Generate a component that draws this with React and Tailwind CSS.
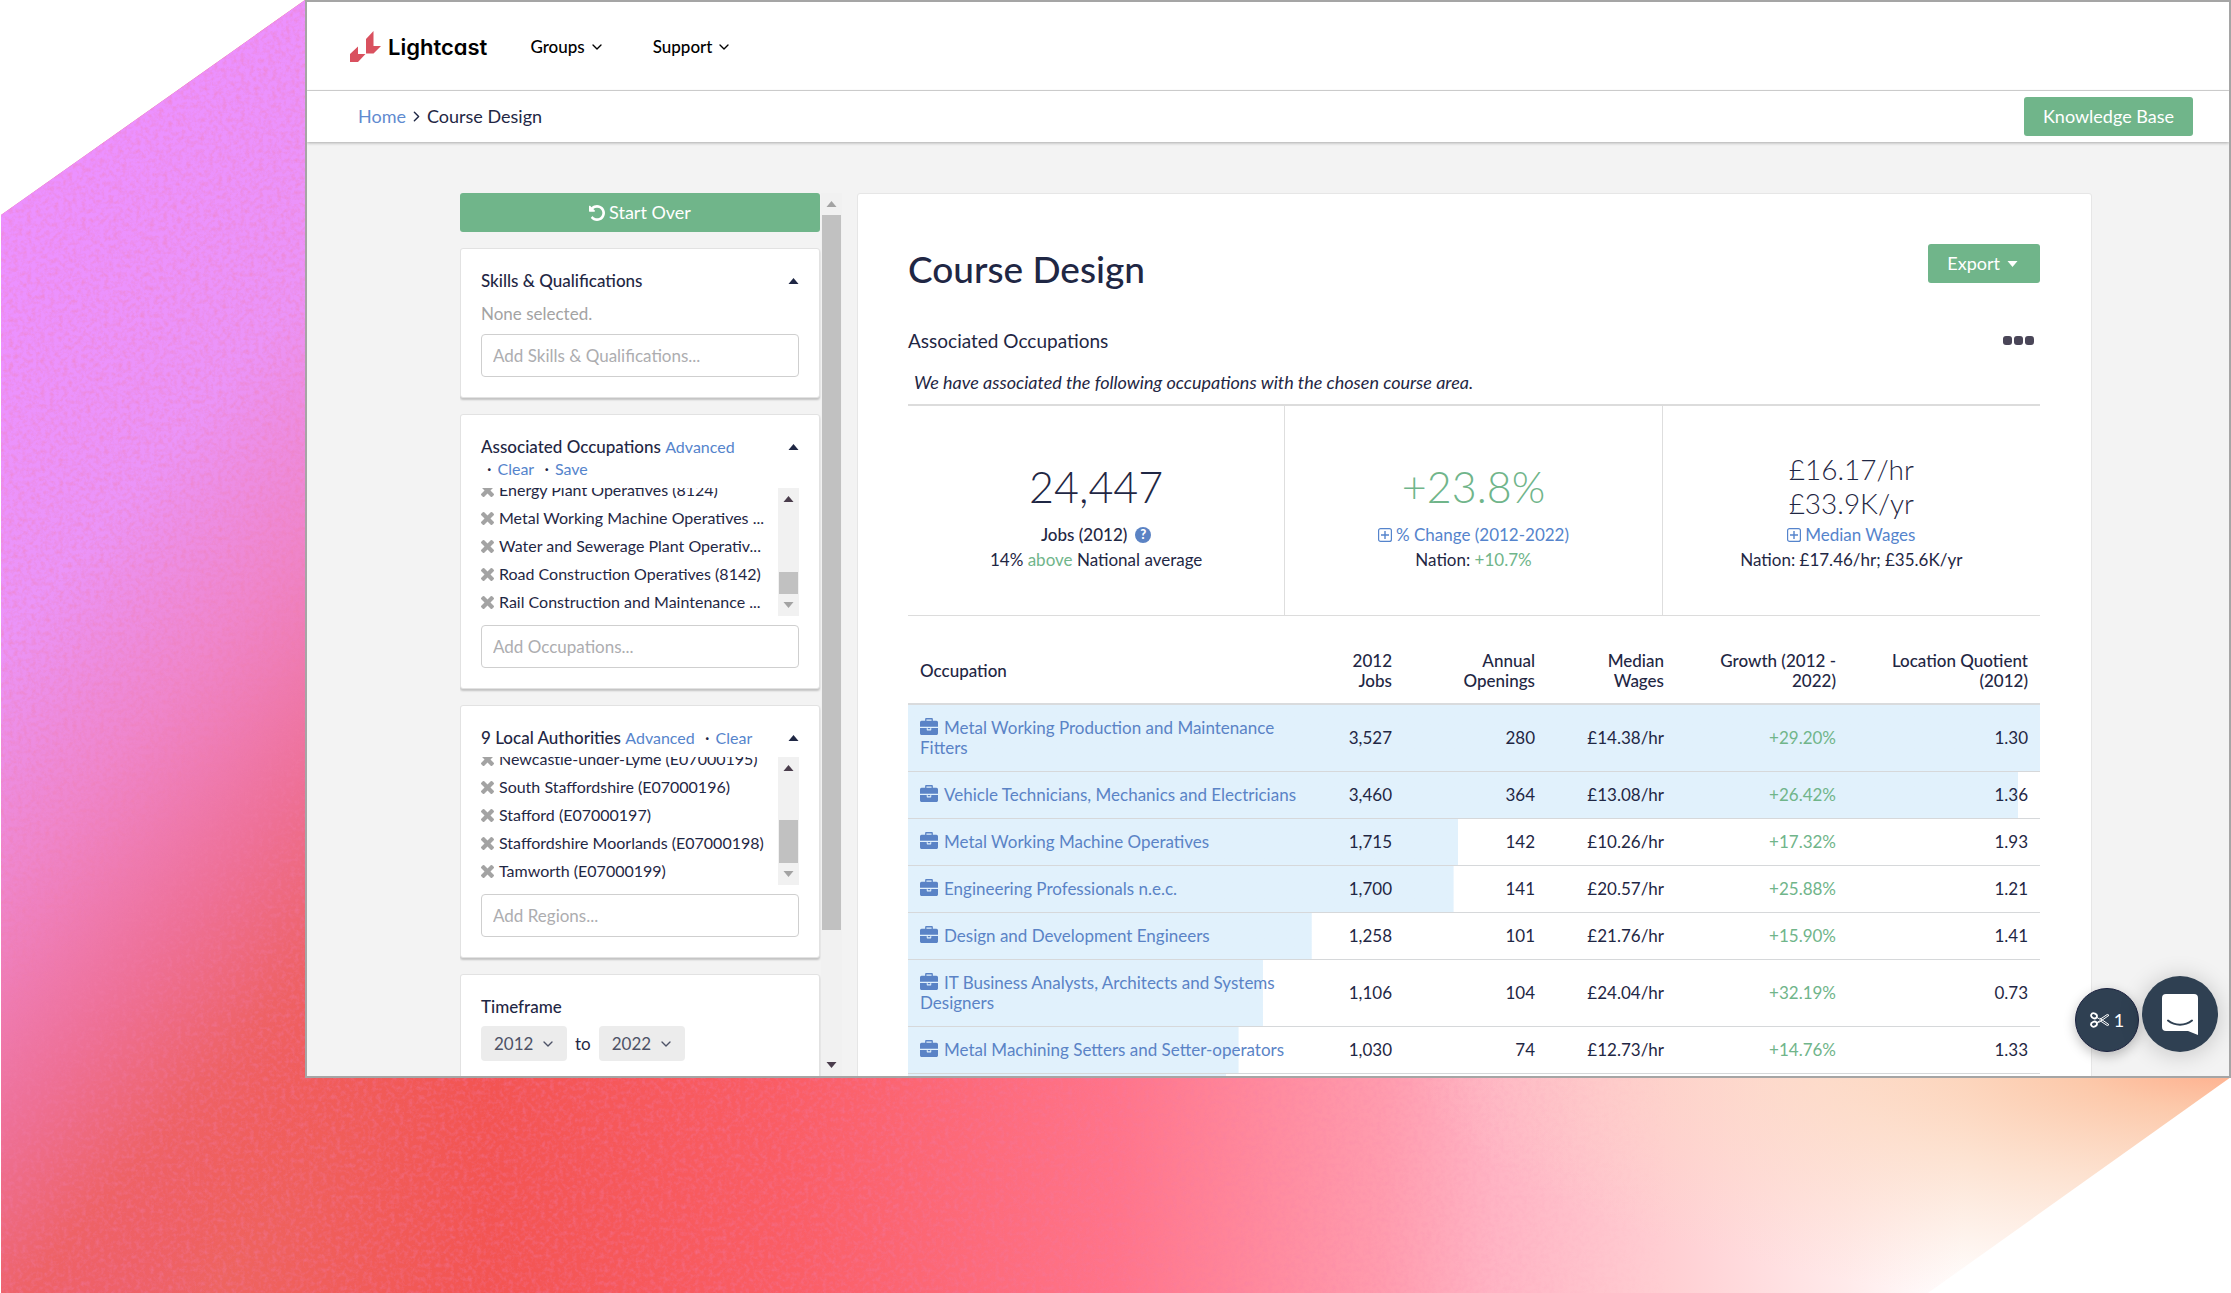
import React from "react";
import { ChevronDown, ChevronRight } from "lucide-react";

const occupations = [
  { name: "Metal Working Production and Maintenance Fitters", jobs: 3527, openings: 280, wage: "£14.38/hr", growth: "+29.20%", lq: "1.30" },
  { name: "Vehicle Technicians, Mechanics and Electricians", jobs: 3460, openings: 364, wage: "£13.08/hr", growth: "+26.42%", lq: "1.36" },
  { name: "Metal Working Machine Operatives", jobs: 1715, openings: 142, wage: "£10.26/hr", growth: "+17.32%", lq: "1.93" },
  { name: "Engineering Professionals n.e.c.", jobs: 1700, openings: 141, wage: "£20.57/hr", growth: "+25.88%", lq: "1.21" },
  { name: "Design and Development Engineers", jobs: 1258, openings: 101, wage: "£21.76/hr", growth: "+15.90%", lq: "1.41" },
  { name: "IT Business Analysts, Architects and Systems Designers", jobs: 1106, openings: 104, wage: "£24.04/hr", growth: "+32.19%", lq: "0.73" },
  { name: "Metal Machining Setters and Setter-operators", jobs: 1030, openings: 74, wage: "£12.73/hr", growth: "+14.76%", lq: "1.33" },
];

const maxJobs = 3527;

const selectedOccupations = [
  "Energy Plant Operatives (8124)",
  "Metal Working Machine Operatives ...",
  "Water and Sewerage Plant Operativ...",
  "Road Construction Operatives (8142)",
  "Rail Construction and Maintenance ...",
];

const selectedRegions = [
  "Newcastle-under-Lyme (E07000195)",
  "South Staffordshire (E07000196)",
  "Stafford (E07000197)",
  "Staffordshire Moorlands (E07000198)",
  "Tamworth (E07000199)",
];

function Backdrop() {
  return (
    <svg className="absolute inset-0 h-full w-full" viewBox="0 0 2231 1293" preserveAspectRatio="none" aria-hidden="true">
      <defs>
        <linearGradient id="base" x1="0" y1="0" x2="2231" y2="0" gradientUnits="userSpaceOnUse">
          <stop offset="0" stopColor="#ea6a8c" />
          <stop offset="0.1" stopColor="#ee6460" />
          <stop offset="0.22" stopColor="#f35452" />
          <stop offset="0.35" stopColor="#fa5d64" />
          <stop offset="0.5" stopColor="#ff748a" />
          <stop offset="0.62" stopColor="#ff9cae" />
          <stop offset="0.67" stopColor="#ffb4c4" />
          <stop offset="0.75" stopColor="#ffcfd3" />
          <stop offset="0.83" stopColor="#ffebeb" />
          <stop offset="0.88" stopColor="#ffffff" />
        </linearGradient>
        <linearGradient id="violet" x1="0" y1="0" x2="759" y2="651" gradientUnits="userSpaceOnUse">
          <stop offset="0.2" stopColor="#ec91ff" />
          <stop offset="0.42" stopColor="#eb94f8" />
          <stop offset="0.58" stopColor="#ef86cc" />
          <stop offset="0.74" stopColor="#ee7096" />
          <stop offset="0.86" stopColor="#ee6266" />
          <stop offset="1" stopColor="#f35452" stopOpacity="0" />
        </linearGradient>
        <radialGradient id="peach" cx="0" cy="0" r="1" gradientUnits="userSpaceOnUse" gradientTransform="translate(2231 1060) scale(820 250)">
          <stop offset="0" stopColor="#ffa885" />
          <stop offset="0.2" stopColor="#fcc6a6" stopOpacity="0.95" />
          <stop offset="0.5" stopColor="#fcd6bd" stopOpacity="0.7" />
          <stop offset="1" stopColor="#fcd9c8" stopOpacity="0" />
        </radialGradient>
        <filter id="grain" x="0" y="0" width="100%" height="100%">
          <feTurbulence type="fractalNoise" baseFrequency="0.22" numOctaves="3" seed="4" />
          <feColorMatrix values="0 0 0 0 0.88  0 0 0 0 0.2  0 0 0 0 0.4  1.1 0 0 0 -0.45" />
        </filter>
        <linearGradient id="fade" x1="0" y1="0" x2="1" y2="0">
          <stop offset="0" stopColor="#fff" />
          <stop offset="0.4" stopColor="#fff" />
          <stop offset="0.75" stopColor="#000" />
        </linearGradient>
        <mask id="grainMask">
          <rect width="2231" height="1293" fill="url(#fade)" />
        </mask>
        <clipPath id="shape">
          <polygon points="1,215 305,0 2231,0 2231,1077 1928,1293 1,1293" />
        </clipPath>
      </defs>
      <g clipPath="url(#shape)">
        <rect width="2231" height="1293" fill="url(#base)" />
        <rect width="2231" height="1293" fill="url(#violet)" />
        <rect width="2231" height="1293" fill="url(#peach)" />
        <g mask="url(#grainMask)">
          <rect width="2231" height="1293" filter="url(#grain)" opacity="0.8" />
        </g>
      </g>
    </svg>
  );
}

function Caret({ up, className = "" }) {
  return (
    <svg viewBox="0 0 10 6" className={`h-[6px] w-[11px] ${className}`} fill="currentColor" aria-hidden="true">
      <path d={up ? "M0 6L5 0l5 6z" : "M0 0h10L5 6z"} />
    </svg>
  );
}

function UndoIcon() {
  return (
    <svg viewBox="0 128 1536 1536" className="size-4" fill="currentColor" aria-hidden="true">
      <path d="M1536 896q0 156-61 298t-164 245-245 164-298 61q-172 0-327-72.5t-264-204.5q-7-10-6.5-22.5t8.5-20.5l137-138q10-9 25-9 16 2 23 12 73 95 179 147t225 52q104 0 198.5-40.5t163.5-109.5 109.5-163.5 40.5-198.5-40.5-198.5-109.5-163.5-163.5-109.5-198.5-40.5q-98 0-188 35.5t-160 101.5l137 138q31 30 14 69-17 40-59 40h-448q-26 0-45-19t-19-45v-448q0-42 40-59 39-17 69 14l130 129q107-101 244.5-156.5t284.5-55.5q156 0 298 61t245 164 164 245 61 298z" />
    </svg>
  );
}

function RemoveIcon() {
  return (
    <svg viewBox="302 366 1188 1188" className="size-[13px]" fill="currentColor" aria-hidden="true">
      <path d="M1490 1322q0 40-28 68l-136 136q-28 28-68 28t-68-28l-294-294-294 294q-28 28-68 28t-68-28l-136-136q-28-28-28-68t28-68l294-294-294-294q-28-28-28-68t28-68l136-136q28-28 68-28t68 28l294 294 294-294q28-28 68-28t68 28l136 136q28 28 28 68t-28 68l-294 294 294 294q28 28 28 68z" />
    </svg>
  );
}

function BriefcaseIcon() {
  return (
    <svg viewBox="0 0 1792 1536" preserveAspectRatio="none" className="-my-1 mr-1.5 inline h-[17px] w-[18px] align-[3px]" fill="currentColor" aria-hidden="true">
      <path d="M640 256h512v-128h-512v128zM1792 896v480q0 66-47 113t-113 47h-1472q-66 0-113-47t-47-113v-480h672v160q0 26 19 45t45 19h320q26 0 45-19t19-45v-160h672zM1024 896v128h-256v-128h256zM1792 416v384h-1792v-384q0-66 47-113t113-47h352v-160q0-40 28-68t68-28h576q40 0 68 28t28 68v160h352q66 0 113 47t47 113z" />
    </svg>
  );
}

function PlusBox() {
  return (
    <svg viewBox="0 0 14 14" className="size-[14px]" fill="none" stroke="currentColor" aria-hidden="true">
      <rect x="0.6" y="0.6" width="12.8" height="12.8" rx="2" strokeWidth="1.2" />
      <path d="M7 3v8M3 7h8" strokeWidth="1.4" />
    </svg>
  );
}

function Header() {
  return (
    <header className="flex h-[89px] shrink-0 items-center border-b border-[#d6d6d6] pt-px pl-[43px]">
      <a href="#" className="flex items-center gap-[7px] text-black">
        <svg viewBox="0 0 31 31" className="size-[31px]" aria-hidden="true">
          <path fill="#d9515f" d="M16 8l7.500-8v15H31l-7.500 7.500H16z" />
          <path fill="#d9515f" d="M0 23l8-7.500V23h7.500L8 31H0z" />
        </svg>
        <span className="font-[Inter] text-[22px] leading-7 font-semibold [font-feature-settings:'cv11']">Lightcast</span>
      </a>
      <nav className="ml-[43px] flex items-center gap-12 text-[17px] font-medium text-black">
        <button className="flex items-center gap-1">Groups <ChevronDown className="size-4" /></button>
        <button className="flex items-center gap-1">Support <ChevronDown className="size-4" /></button>
      </nav>
    </header>
  );
}

function Breadcrumb() {
  return (
    <div className="relative z-10 flex h-[51px] shrink-0 items-center justify-between bg-white pr-9 pl-[51px] text-[18px] shadow-[0_1px_3px_rgba(0,0,0,0.3)]">
      <div className="flex items-center">
        <a href="#" className="text-[#5f8bd0]">Home</a>
        <ChevronRight className="mx-0.5 size-[17px]" />
        <span>Course Design</span>
      </div>
      <button className="h-[39px] rounded-[3px] bg-[#70b58a] px-[19px] text-white">Knowledge Base</button>
    </div>
  );
}

function Card({ title, links = [], children, collapsible = true }) {
  return (
    <section className="rounded-[3px] border border-[#e2e2e2] bg-white px-5 pt-[21px] pb-5 shadow-[0_2px_2px_rgba(0,0,0,0.2)]">
      <div className="flex items-start justify-between">
        <h3 className="w-[290px] text-[17px] leading-[22px] font-medium">
          {title}
          {links.map((link, i) => (
            <React.Fragment key={link}>
              {" "}
              {i > 0 && <span className="mx-1.5">·</span>}
              <a href="#" className="text-[16px] font-normal text-[#5584cc]">{link}</a>
            </React.Fragment>
          ))}
        </h3>
        {collapsible && (
          <button aria-label={`Collapse ${title}`} className="flex h-[22px] items-center">
            <Caret up />
          </button>
        )}
      </div>
      {children}
    </section>
  );
}

function SelectedList({ items, thumb }) {
  return (
    <div className="mt-2 flex h-[128px] overflow-hidden">
      <ul className="flex min-w-0 flex-1 flex-col justify-end text-[16px] leading-7">
        {items.map((item) => (
          <li key={item} className="flex shrink-0 items-center gap-[5px]">
            <button aria-label={`Remove ${item}`} className="text-[#a3a3a3]"><RemoveIcon /></button>
            <span className="whitespace-nowrap">{item}</span>
          </li>
        ))}
      </ul>
      <div className="flex w-[21px] shrink-0 flex-col items-center justify-between bg-[#f1f1f1] py-2" aria-hidden="true">
        <Caret up className="text-[#4a3d4c]" />
        <div className="flex w-full flex-col items-center gap-2">
          <div className={thumb} />
          <Caret className="text-[#a3a3a3]" />
        </div>
      </div>
    </div>
  );
}

function AddInput({ placeholder }) {
  return (
    <input
      type="text"
      aria-label={placeholder}
      placeholder={placeholder}
      className="mt-[9px] block h-[43px] w-full rounded-[4px] border border-[#cfcfcf] px-[11px] text-[17px] placeholder:text-[#adadb0]"
    />
  );
}

function YearSelect({ label, year }) {
  return (
    <span className="relative flex items-center text-[#4d5266]">
      <select aria-label={label} defaultValue={year} className="h-[35px] w-[86px] appearance-none rounded-[4px] bg-[#ececec] pl-[13px] text-[17px]">
        <option>{year}</option>
      </select>
      <ChevronDown className="pointer-events-none absolute right-[11px] size-4" />
    </span>
  );
}

function Sidebar() {
  return (
    <aside className="flex w-[382px] shrink-0">
      <div className="flex min-w-0 flex-1 flex-col gap-4 overflow-hidden pr-px pb-4">
        <button className="flex h-[39px] shrink-0 items-center justify-center gap-1 rounded-[3px] bg-[#70b58a] text-[18px] text-white">
          <UndoIcon /> Start Over
        </button>
        <Card title="Skills & Qualifications">
          <p className="mt-[11px] text-[17px] leading-[22px] text-[#a3a3a3]">None selected.</p>
          <AddInput placeholder="Add Skills & Qualifications..." />
        </Card>
        <Card title="Associated Occupations" links={["Advanced", "Clear", "Save"]}>
          <SelectedList items={selectedOccupations} thumb="h-[22px] w-[19px] bg-[#c1c1c1]" />
          <AddInput placeholder="Add Occupations..." />
        </Card>
        <Card title="9 Local Authorities" links={["Advanced", "Clear"]}>
          <SelectedList items={selectedRegions} thumb="h-[43px] w-[19px] bg-[#c1c1c1]" />
          <AddInput placeholder="Add Regions..." />
        </Card>
        <Card title="Timeframe" collapsible={false}>
          <div className="mt-2 flex items-center gap-2 text-[17px]">
            <YearSelect label="Start year" year="2012" />
            <span>to</span>
            <YearSelect label="End year" year="2022" />
          </div>
        </Card>
      </div>
      <div className="flex w-[21px] shrink-0 flex-col items-center justify-between bg-[#f1f1f1] py-2" aria-hidden="true">
        <div className="flex min-h-0 w-full flex-1 flex-col items-center gap-2">
          <Caret up className="shrink-0 text-[#a3a3a3]" />
          <div className="h-[83%] w-[19px] bg-[#c1c1c1]" />
        </div>
        <Caret className="shrink-0 text-[#4a3d4c]" />
      </div>
    </aside>
  );
}

function Stats() {
  return (
    <div className="grid grid-cols-3 divide-x divide-[#dedede] border-t-2 border-b border-[#dcdcdc] text-center text-[17px] leading-[25px]">
      <div className="flex h-[209px] flex-col items-center justify-center pt-[3px]">
        <div className="text-[43px] leading-[70px] font-light">24,447</div>
        <div className="flex items-center gap-2 font-medium">
          Jobs (2012)
          <button aria-label="About jobs" className="flex size-4 items-center justify-center rounded-full bg-[#5b83c4] text-[13px] leading-none font-black text-white">?</button>
        </div>
        <div>14% <span className="text-[#70b58a]">above</span> National average</div>
      </div>
      <div className="flex h-[209px] flex-col items-center justify-center pt-[3px]">
        <div className="text-[43px] leading-[70px] font-light text-[#70b58a]">+23.8%</div>
        <a href="#" className="flex items-center gap-1 text-[#5584cc]"><PlusBox />% Change (2012-2022)</a>
        <div>Nation: <span className="text-[#70b58a]">+10.7%</span></div>
      </div>
      <div className="flex h-[209px] flex-col items-center justify-center pt-[3px]">
        <div className="h-[70px] text-[28px] leading-[34px] font-light">
          £16.17/hr
          <br />
          £33.9K/yr
        </div>
        <a href="#" className="flex items-center gap-1 text-[#5584cc]"><PlusBox />Median Wages</a>
        <div>Nation: £17.46/hr; £35.6K/yr</div>
      </div>
    </div>
  );
}

function OccupationTable() {
  return (
    <table className="w-full table-fixed text-right text-[17px] leading-5">
      <thead>
        <tr className="border-b-2 border-[#d9dbdd]">
          <th className="px-3 pt-[35px] pb-3 text-left font-medium">Occupation</th>
          <th className="w-[100px] pt-[35px] pr-3 pb-3 font-medium">2012<br />Jobs</th>
          <th className="w-[143px] pt-[35px] pr-3 pb-3 font-medium">Annual<br />Openings</th>
          <th className="w-[129px] pt-[35px] pr-3 pb-3 font-medium">Median<br />Wages</th>
          <th className="w-[172px] pt-[35px] pr-3 pb-3 font-medium">Growth (2012 -<br />2022)</th>
          <th className="w-[192px] pt-[35px] pr-3 pb-3 font-medium">Location Quotient<br />(2012)</th>
        </tr>
      </thead>
      <tbody>
        {occupations.map((o) => (
          <tr
            key={o.name}
            className="border-b border-[#d6d8da] bg-linear-to-r from-[#e1f1fc] to-[#e1f1fc] bg-no-repeat"
            style={{ backgroundSize: `${(o.jobs / maxJobs) * 100}% 100%` }}
          >
            <td className="py-[13px] pl-3 text-left">
              <a href="#" className="text-[#5a83c6]">
                <BriefcaseIcon />
                {o.name}
              </a>
            </td>
            <td className="pr-3">{o.jobs.toLocaleString("en-GB")}</td>
            <td className="pr-3">{o.openings}</td>
            <td className="pr-3">{o.wage}</td>
            <td className="pr-3 text-[#70b58a]">{o.growth}</td>
            <td className="pr-3">{o.lq}</td>
          </tr>
        ))}
        <tr className="bg-linear-to-r from-[#e1f1fc] to-[#e1f1fc] bg-no-repeat" style={{ backgroundSize: `${(991 / maxJobs) * 100}% 100%` }}>
          <td colSpan={6} className="h-[46px]" />
        </tr>
      </tbody>
    </table>
  );
}

function FloatingButtons() {
  return (
    <div className="absolute right-[11px] bottom-6 z-20 flex items-end gap-[3px]">
      <button className="flex size-16 items-center justify-center gap-1 rounded-full border border-[#1c2340] bg-[#2f4052] text-[18px] text-white shadow-[0_4px_12px_rgba(0,0,0,0.25)]" aria-label="Clippings: 1">
        <svg viewBox="0 0 20 16" className="h-4 w-5" fill="none" stroke="currentColor" aria-hidden="true">
          <ellipse cx="4" cy="3.800" rx="3" ry="2.400" strokeWidth="1.800" transform="rotate(25 4 3.800)" />
          <ellipse cx="4" cy="12.200" rx="3" ry="2.400" strokeWidth="1.800" transform="rotate(-25 4 12.200)" />
          <path d="M6.500 5.200L10 7.300l7.200-4.800 1.800.8-10.300 7.200-2.200.4M6.500 10.800L10 8.700l7.200 4.800 1.800-.8L9.800 6.200" strokeWidth="1" />
        </svg>
        <span>1</span>
      </button>
      <button className="flex size-[76px] items-center justify-center rounded-full bg-[#2f4052] shadow-[0_2px_24px_rgba(0,0,0,0.2)]" aria-label="Open chat">
        <svg viewBox="0 0 36 41" className="h-[41px] w-9" aria-hidden="true">
          <path fill="#fff" d="M4 0h28a4 4 0 0 1 4 4v37l-10-4H4a4 4 0 0 1-4-4V4a4 4 0 0 1 4-4z" />
          <path d="M6 26.500c7 5.500 17 5.500 24 0" fill="none" stroke="#2f4052" strokeWidth="2" strokeLinecap="round" />
        </svg>
      </button>
    </div>
  );
}

export default function App() {
  return (
    <div className="relative flex h-screen bg-white pb-[215px] pl-[305px] font-[Lato,sans-serif] text-[#1f2744]">
      <Backdrop />
      <div className="relative flex min-w-0 flex-1 flex-col overflow-hidden border-2 border-[#a5a5a5] bg-white">
        <Header />
        <Breadcrumb />
        <div className="flex min-h-0 flex-1 gap-[15px] bg-[#f3f3f3] pt-[51px] pr-[137px] pl-[153px]">
          <Sidebar />
          <main className="h-fit min-w-0 flex-1 rounded-[3px] border border-[#e6e6e6] bg-white pt-[50px] pr-[51px] pl-[50px]">
            <div className="flex items-start justify-between">
              <h1 className="text-[37px] leading-[50px] font-medium">Course Design</h1>
              <button className="flex h-[39px] items-center gap-[7px] rounded-[3px] bg-[#70b58a] pr-[22px] pl-[19px] text-[18px] text-white">
                Export <Caret />
              </button>
            </div>
            <div className="mt-8 flex items-center justify-between">
              <h2 className="text-[19px] leading-[29px]">Associated Occupations</h2>
              <button aria-label="More options" className="mr-1.5 flex gap-0.5">
                <span className="size-[9px] rounded-[3px] bg-[#4a4658]" />
                <span className="size-[9px] rounded-[3px] bg-[#4a4658]" />
                <span className="size-[9px] rounded-[3px] bg-[#4a4658]" />
              </button>
            </div>
            <p className="mt-[15px] mb-[9px] pl-1.5 text-[18px] leading-[25px] italic">We have associated the following occupations with the chosen course area.</p>
            <Stats />
            <OccupationTable />
          </main>
        </div>
        <FloatingButtons />
      </div>
    </div>
  );
}
